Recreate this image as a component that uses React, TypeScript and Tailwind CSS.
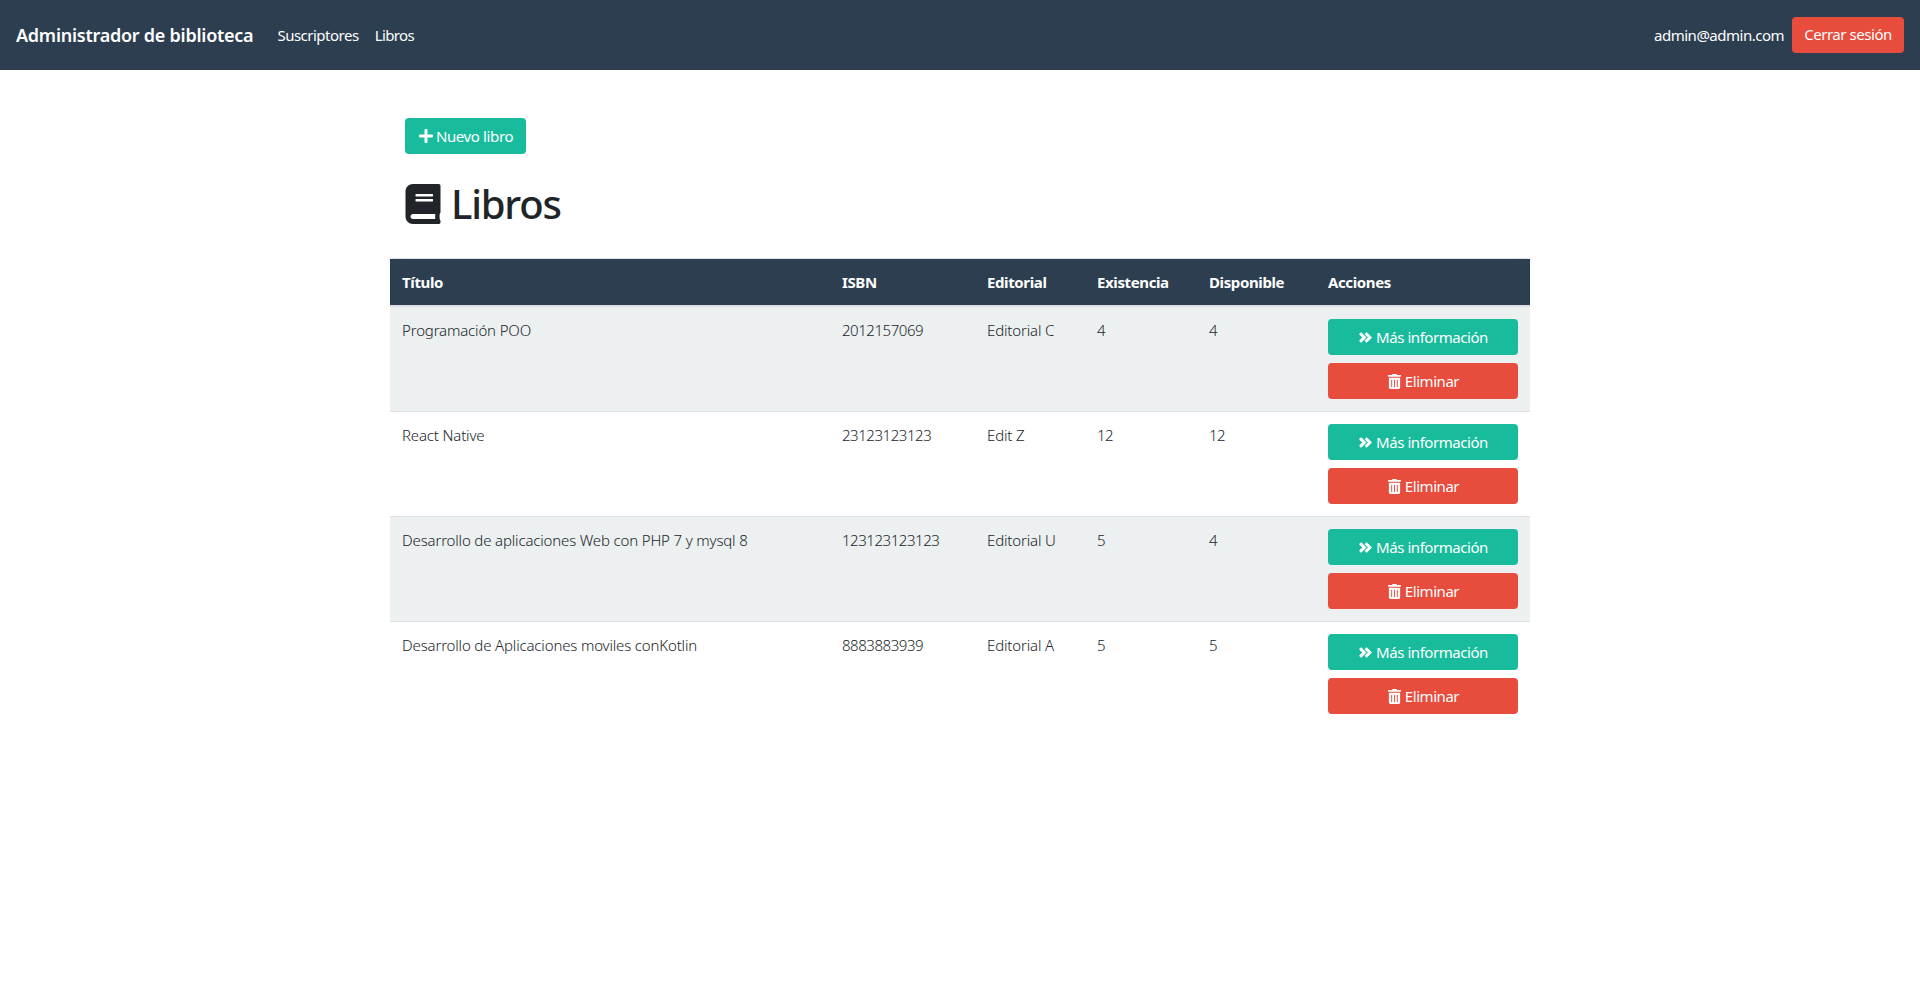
import { FaAngleDoubleRight, FaBook, FaPlus, FaTrashAlt } from "react-icons/fa";

const books = [
  { title: "Programación POO", isbn: "2012157069", editorial: "Editorial C", stock: 4, available: 4 },
  { title: "React Native", isbn: "23123123123", editorial: "Edit Z", stock: 12, available: 12 },
  { title: "Desarrollo de aplicaciones Web con PHP 7 y mysql 8", isbn: "123123123123", editorial: "Editorial U", stock: 5, available: 4 },
  { title: "Desarrollo de Aplicaciones moviles conKotlin", isbn: "8883883939", editorial: "Editorial A", stock: 5, available: 5 },
];

const App = () => {
  return (
    <div className="min-h-[1007px] bg-white font-['Noto_Sans',sans-serif] text-[15px] tracking-[-0.38px] text-[#212529]">
      <nav className="flex h-[70px] items-center justify-between bg-[#2c3e50] pl-4 pr-4 text-white">
        <div className="flex items-center">
          <a className="text-[18px] font-semibold tracking-[-0.25px]">Administrador de biblioteca</a>
          <a className="ml-[24px] tracking-[-0.5px]">Suscriptores</a>
          <a className="ml-4 tracking-[-0.6px]">Libros</a>
        </div>
        <div className="flex items-center gap-2">
          <span className="tracking-[-0.5px]">admin@admin.com</span>
          <button className="h-9 w-[112px] rounded bg-[#e74c3c] pb-[2px] tracking-[-0.45px]">Cerrar sesión</button>
        </div>
      </nav>

      <main className="mx-auto w-[1140px] pt-12">
        <button className="ml-[15px] flex h-9 w-[121px] items-center justify-center gap-[2px] rounded bg-[#18bc9c] text-white">
          <FaPlus className="text-[16px]" />
          Nuevo libro
        </button>
        <h1 className="mb-[30px] ml-[15px] mt-[26px] flex h-12 items-center gap-[10px] text-[40px] font-medium tracking-[-1.2px]">
          <FaBook className="h-10 w-[36px]" />
          Libros
        </h1>

        <table className="w-full table-fixed border-collapse text-left">
          <colgroup>
            <col className="w-[440px]" />
            <col className="w-[145px]" />
            <col className="w-[110px]" />
            <col className="w-[112px]" />
            <col className="w-[119px]" />
            <col />
          </colgroup>
          <thead className="bg-[#2c3e50] text-white">
            <tr className="h-[47px] border-b-2 border-t border-[#dee2e6]">
              <th className="px-3 font-bold">Título</th>
              <th className="px-3 font-bold">ISBN</th>
              <th className="px-3 font-bold">Editorial</th>
              <th className="px-3 font-bold">Existencia</th>
              <th className="px-3 font-bold">Disponible</th>
              <th className="px-3 font-bold">Acciones</th>
            </tr>
          </thead>
          <tbody className="font-light">
            {books.map((book, i) => (
              <tr
                key={book.title}
                className={
                  i === books.length - 1
                    ? ""
                    : i % 2 === 0
                      ? "border-b border-[#dee2e6] bg-[#ecf0f1]"
                      : "border-b border-[#dee2e6]"
                }
              >
                <td className="p-3 align-top tracking-[-0.16px]">{book.title}</td>
                <td className="p-3 align-top tracking-[-0.45px]">{book.isbn}</td>
                <td className="p-3 align-top tracking-[-0.16px]">{book.editorial}</td>
                <td className="p-3 align-top tracking-[-0.45px]">{book.stock}</td>
                <td className="p-3 align-top tracking-[-0.45px]">{book.available}</td>
                <td className="p-3 align-top font-normal tracking-[-0.45px]">
                  <button className="flex h-9 w-full items-center justify-center gap-[3px] rounded bg-[#18bc9c] pt-px text-white">
                    <FaAngleDoubleRight className="text-[15px]" stroke="currentColor" strokeWidth={30} />
                    Más información
                  </button>
                  <button className="mt-2 flex h-9 w-full items-center justify-center gap-[3px] rounded bg-[#e74c3c] pt-px text-white">
                    <FaTrashAlt className="text-[15px]" />
                    Eliminar
                  </button>
                </td>
              </tr>
            ))}
          </tbody>
        </table>
      </main>
    </div>
  );
};

export default App;
